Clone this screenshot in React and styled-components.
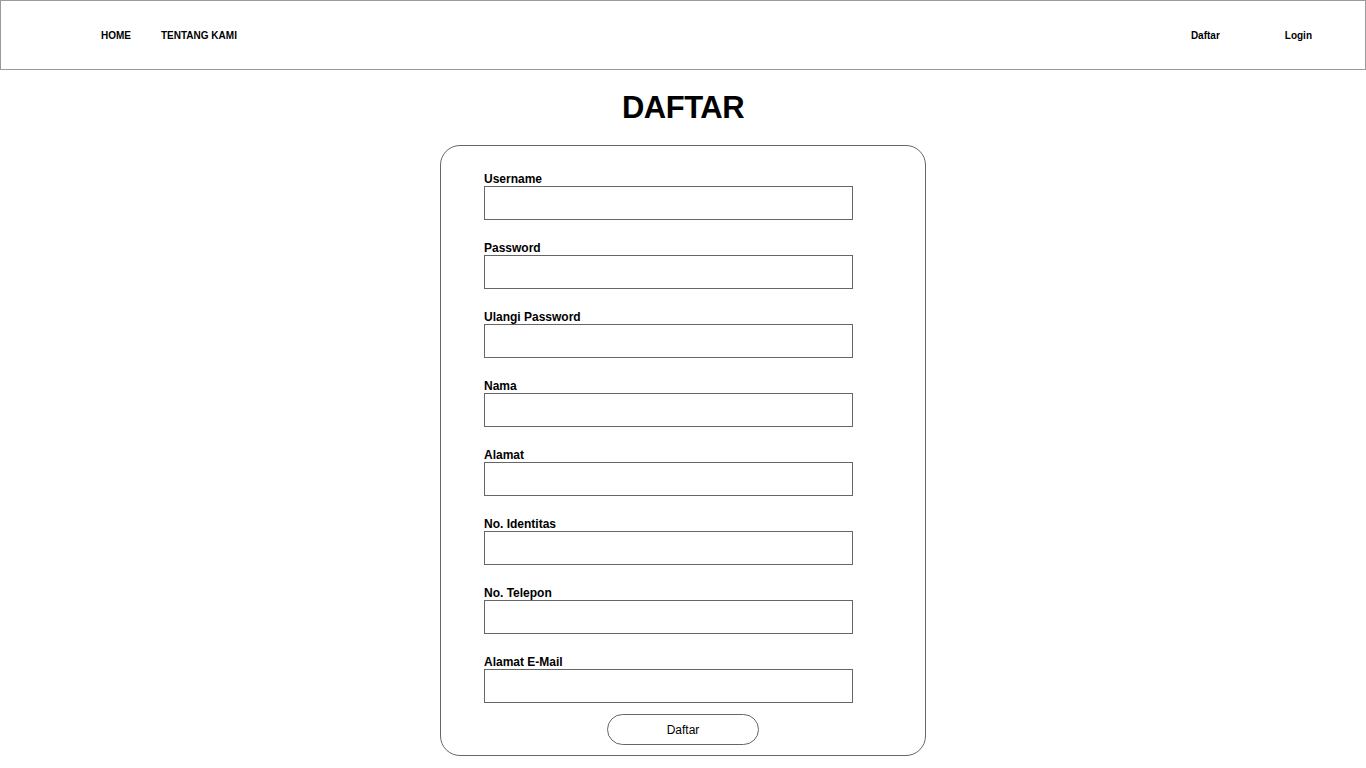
import React from "react";
import styled, { createGlobalStyle } from "styled-components";

const Global = createGlobalStyle`
  html, body { margin: 0; padding: 0; background: #fff; }
  body { font-family: "Liberation Sans", Arial, sans-serif; color: #000; }
  * { box-sizing: border-box; }
`;

const Header = styled.header`
  height: 70px;
  border: 1px solid #9a9a9a;
  display: flex;
  align-items: center;
  justify-content: space-between;
  padding: 2px 53px 0 100px;
`;

const NavGroup = styled.nav`
  display: flex;
  align-items: center;
  gap: ${(p) => p.$gap}px;
`;

const NavLink = styled.a`
  font-size: 10px;
  font-weight: bold;
  color: #000;
  text-decoration: none;
  line-height: 12px;
  cursor: pointer;
`;

const Title = styled.h1`
  margin: 0;
  height: 75px;
  display: flex;
  align-items: center;
  justify-content: center;
  font-size: 31px;
  font-weight: bold;
  letter-spacing: -0.5px;
`;

const Card = styled.form`
  width: 486px;
  height: 611px;
  margin: 0 auto;
  border: 1px solid #666;
  border-radius: 20px;
  padding: 26px 43px 0 43px;
  display: flex;
  flex-direction: column;
`;

const Fields = styled.div`
  display: flex;
  flex-direction: column;
  gap: 21px;
`;

const Field = styled.div`
  display: flex;
  flex-direction: column;
`;

const Label = styled.label`
  font-size: 12px;
  font-weight: bold;
  line-height: 14px;
  height: 14px;
`;

const Input = styled.input`
  width: 369px;
  height: 34px;
  border: 1px solid #666;
  border-radius: 0;
  margin: 0;
  padding: 0 6px;
  font-family: inherit;
  font-size: 12px;
  outline: none;
`;

const ButtonRow = styled.div`
  display: flex;
  justify-content: center;
  margin-top: 11px;
`;

const Button = styled.button`
  width: 152px;
  height: 31px;
  border: 1px solid #666;
  border-radius: 16px;
  background: #fff;
  font-family: "Liberation Sans", Arial, sans-serif;
  font-size: 12px;
  color: #000;
  cursor: pointer;
  padding: 0;
`;

const fields = [
  "Username",
  "Password",
  "Ulangi Password",
  "Nama",
  "Alamat",
  "No. Identitas",
  "No. Telepon",
  "Alamat E-Mail",
];

export default function App() {
  return (
    <>
      <Global />
      <Header>
        <NavGroup $gap={30}>
          <NavLink>HOME</NavLink>
          <NavLink>TENTANG KAMI</NavLink>
        </NavGroup>
        <NavGroup $gap={65}>
          <NavLink>Daftar</NavLink>
          <NavLink>Login</NavLink>
        </NavGroup>
      </Header>
      <Title>DAFTAR</Title>
      <Card onSubmit={(e) => e.preventDefault()}>
        <Fields>
          {fields.map((f) => (
            <Field key={f}>
              <Label>{f}</Label>
              <Input type={f.includes("Password") ? "password" : "text"} />
            </Field>
          ))}
        </Fields>
        <ButtonRow>
          <Button type="submit">Daftar</Button>
        </ButtonRow>
      </Card>
    </>
  );
}
